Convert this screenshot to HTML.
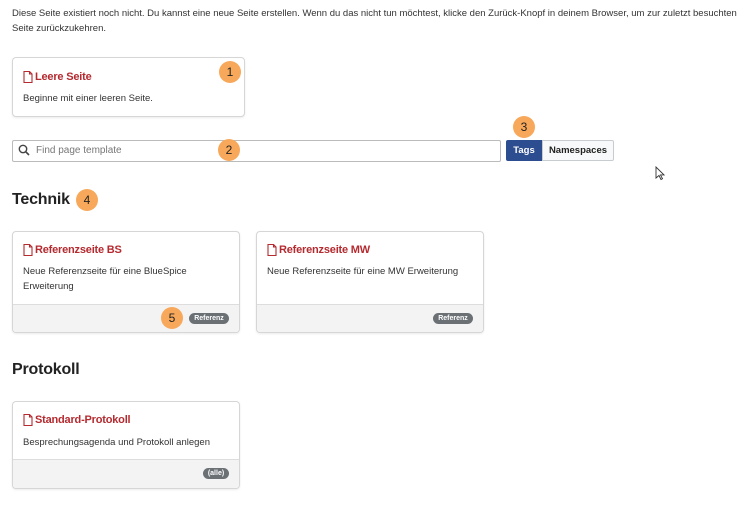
<!DOCTYPE html><html><head><style>
body{margin:0;width:750px;height:506px;background:#fff;font-family:"Liberation Sans",sans-serif;color:#333;position:relative;overflow:hidden}
.a{position:absolute}
.t{font-size:9.5px;line-height:15px;color:#333}
.card{position:absolute;border:1px solid #d6d6d6;border-radius:4px;background:#fff;box-shadow:0 1px 2px rgba(0,0,0,.08)}
.ttl{position:absolute;left:10px;font-size:11px;font-weight:bold;color:#b52a2f;display:flex;align-items:center;gap:2px;letter-spacing:-.2px}
.ttl svg{width:10px;height:12px}
.desc{position:absolute;left:10px;font-size:9.5px;line-height:15px;color:#333}
.foot{position:absolute;left:0;right:0;bottom:0;background:#f3f3f3;border-top:1px solid #ddd;border-radius:0 0 4px 4px}
.pill{position:absolute;background:#6b7075;color:#fff;font-size:7px;font-weight:bold;border-radius:6px;height:11px;line-height:11px;text-align:center}
.b{position:absolute;width:22px;height:22px;border-radius:50%;background:#f7a85a;font-size:12px;line-height:22px;text-align:center;color:#222}
h2{position:absolute;margin:0;font-size:16px;font-weight:bold;color:#222;letter-spacing:-.2px}
</style></head><body>
<div class="a t" style="left:12px;top:6px;width:730px">Diese Seite existiert noch nicht. Du kannst eine neue Seite erstellen. Wenn du das nicht tun möchtest, klicke den Zurück-Knopf in deinem Browser, um zur zuletzt besuchten Seite zurückzukehren.</div>

<div class="card" style="left:12px;top:57px;width:231px;height:58px">
<div class="ttl" style="top:13px"><svg viewBox="0 0 10 12"><path d="M1 .5h5.5L9 3v8.5H1z M6.5 .5V3H9" fill="none" stroke="#b52a2f" stroke-width="1.1"/></svg>Leere Seite</div>
<div class="desc" style="top:33px">Beginne mit einer leeren Seite.</div></div>
<div class="b" style="left:219px;top:61px">1</div>

<div class="a" style="left:12px;top:140px;width:487px;height:20px;border:1px solid #bbb;border-radius:2px"></div>
<svg class="a" style="left:18px;top:144px" width="12" height="12" viewBox="0 0 12 12"><circle cx="5" cy="5" r="3.7" fill="none" stroke="#444" stroke-width="1.4"/><path d="M7.7 7.7l3.3 3.3" stroke="#444" stroke-width="1.6"/></svg>
<div class="a" style="left:36px;top:145px;font-size:10px;color:#777">Find page template</div>
<div class="b" style="left:218px;top:139px">2</div>

<div class="a" style="left:506px;top:140px;width:36px;height:21px;background:#2c4d8f;color:#fff;font-size:9.5px;font-weight:bold;line-height:21px;text-align:center;border-radius:2px 0 0 2px">Tags</div>
<div class="a" style="left:542px;top:140px;width:70px;height:19px;border:1px solid #c8ccd1;background:#f8f9fa;color:#222;font-size:9.5px;font-weight:bold;line-height:19px;text-align:center;border-radius:0 2px 2px 0">Namespaces</div>
<div class="b" style="left:513px;top:116px">3</div>
<svg class="a" style="left:655px;top:166px" width="10" height="15" viewBox="0 0 10 15"><path d="M1 1v11l3-2.5 2 4 1.5-.8-2-3.8H9z" fill="#fff" stroke="#333" stroke-width=".9"/></svg>

<h2 style="left:12px;top:191px">Technik</h2>
<div class="b" style="left:76px;top:189px">4</div>

<div class="card" style="left:12px;top:231px;width:226px;height:100px">
<div class="ttl" style="top:12px"><svg viewBox="0 0 10 12"><path d="M1 .5h5.5L9 3v8.5H1z M6.5 .5V3H9" fill="none" stroke="#b52a2f" stroke-width="1.1"/></svg>Referenzseite BS</div>
<div class="desc" style="top:32px">Neue Referenzseite für eine BlueSpice<br>Erweiterung</div>
<div class="foot" style="height:27px"><div class="pill" style="left:176px;top:8px;width:40px">Referenz</div></div></div>
<div class="b" style="left:161px;top:307px">5</div>

<div class="card" style="left:256px;top:231px;width:226px;height:100px">
<div class="ttl" style="top:12px"><svg viewBox="0 0 10 12"><path d="M1 .5h5.5L9 3v8.5H1z M6.5 .5V3H9" fill="none" stroke="#b52a2f" stroke-width="1.1"/></svg>Referenzseite MW</div>
<div class="desc" style="top:32px">Neue Referenzseite für eine MW Erweiterung</div>
<div class="foot" style="height:27px"><div class="pill" style="left:176px;top:8px;width:40px">Referenz</div></div></div>

<h2 style="left:12px;top:361px">Protokoll</h2>

<div class="card" style="left:12px;top:401px;width:226px;height:86px">
<div class="ttl" style="top:12px"><svg viewBox="0 0 10 12"><path d="M1 .5h5.5L9 3v8.5H1z M6.5 .5V3H9" fill="none" stroke="#b52a2f" stroke-width="1.1"/></svg>Standard-Protokoll</div>
<div class="desc" style="top:33px">Besprechungsagenda und Protokoll anlegen</div>
<div class="foot" style="height:28px"><div class="pill" style="left:190px;top:8px;width:26px">(alle)</div></div></div>
</body></html>
